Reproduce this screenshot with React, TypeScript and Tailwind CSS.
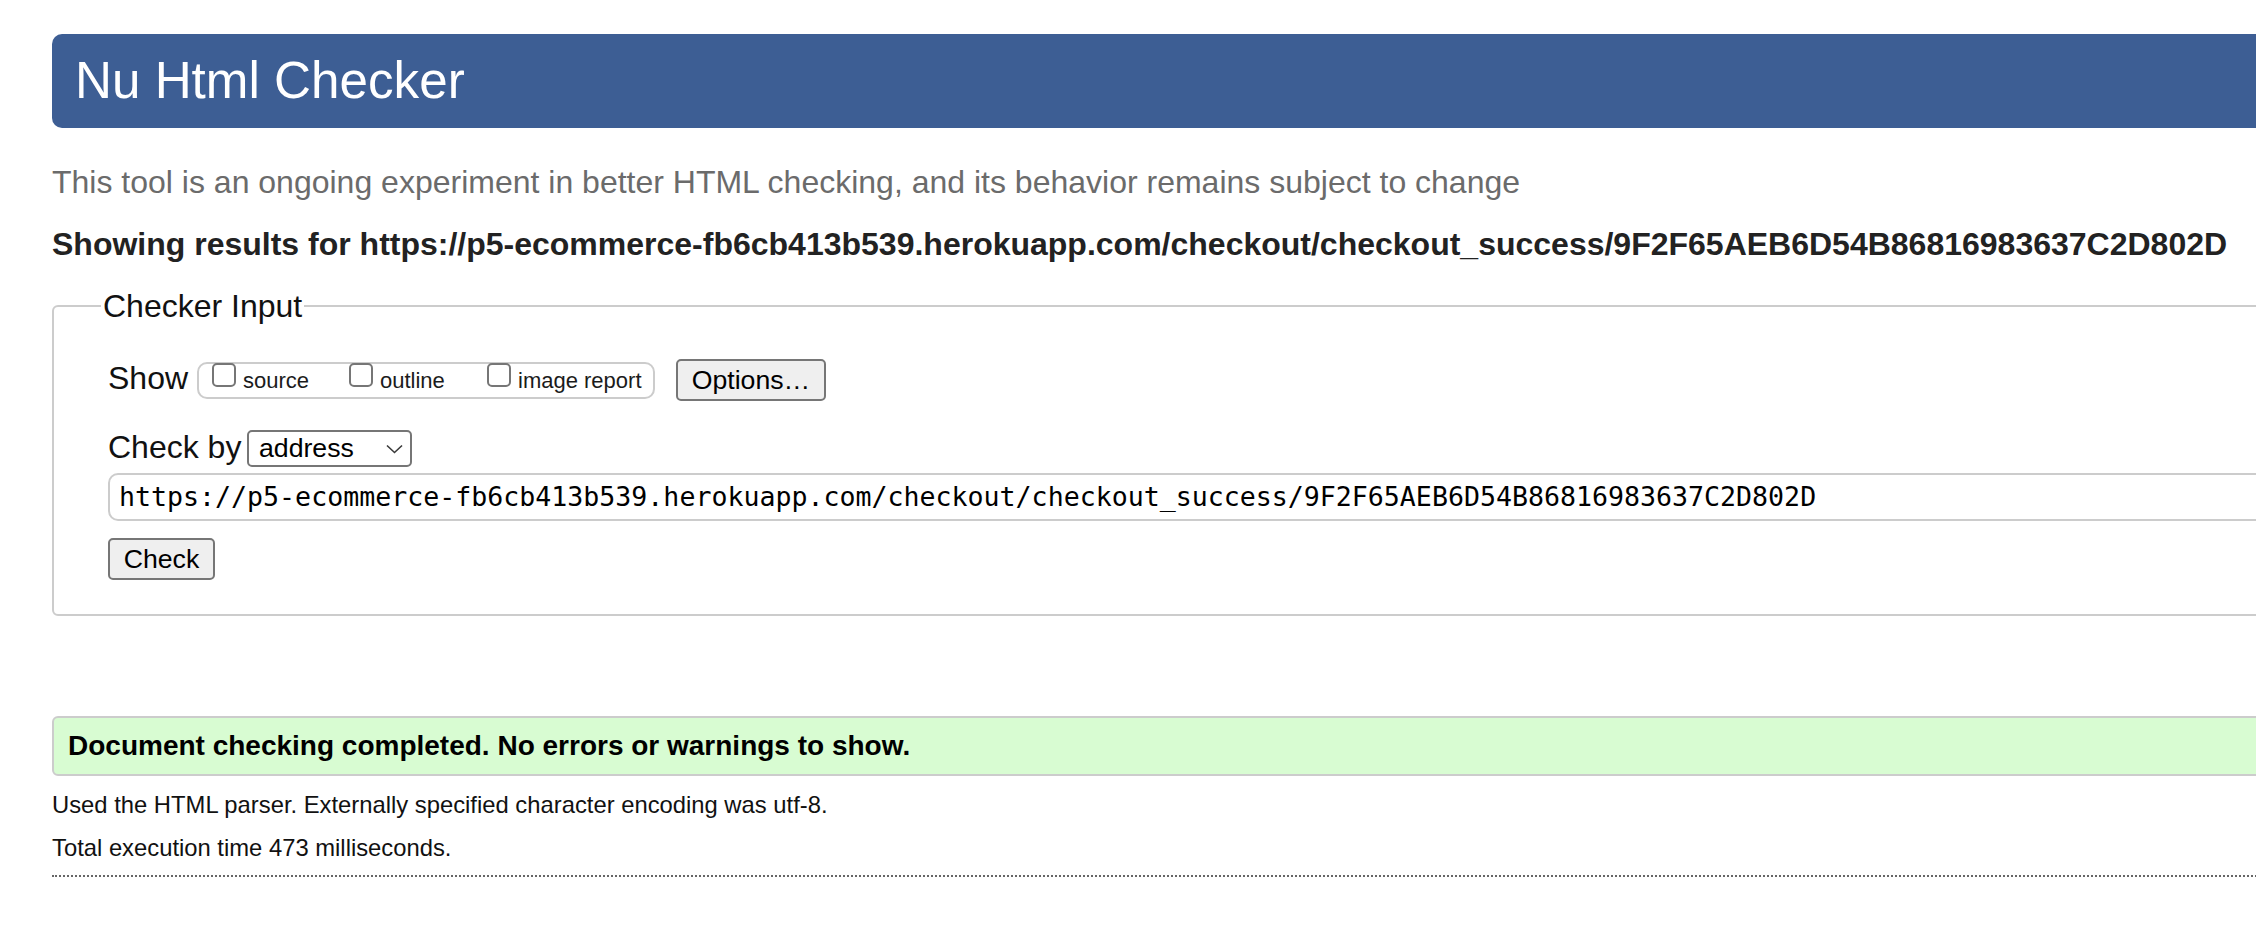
import React from "react";

const URL =
  "https://p5-ecommerce-fb6cb413b539.herokuapp.com/checkout/checkout_success/9F2F65AEB6D54B86816983637C2D802D";

function CheckBox({ label, width }: { label: string; width?: string }) {
  return (
    <label className={`flex items-start ${width ?? ""}`}>
      <span className="-mt-px block h-[24px] w-[24px] shrink-0 rounded-[5px] border-2 border-[#767676] bg-white" />
      <span className="ml-[7px] mt-[6px] text-[22px] leading-none text-[#1b1b1b]">{label}</span>
    </label>
  );
}

export default function App() {
  return (
    <div className="h-[928px] w-[2256px] overflow-hidden bg-white font-['Liberation_Sans',Arial,sans-serif]">
      <div className="w-[2400px] pl-[52px] pt-[34px]">
        <h1 className="flex h-[94px] items-center rounded-l-[10px] bg-[#3d5e94] pl-[23px] text-[51.2px] font-normal leading-none text-white">
          Nu Html Checker
        </h1>

        <p className="mt-[38px] text-[32px] leading-none text-[#6b6b6b]">
          This tool is an ongoing experiment in better HTML checking, and its behavior remains subject to change
        </p>

        <p className="mt-[30px] text-[32px] font-bold leading-none text-[#222]">
          Showing results for {URL}
        </p>

        <fieldset className="mt-[30px] rounded-[6px] border-2 border-[#ccc]">
          <legend className="ml-[47px] px-[2px] text-[32px] leading-none text-[#111]">Checker Input</legend>
          <div className="pb-[34px] pl-[54px] pt-[37px]">
            {/* show row */}
            <div className="flex h-[42px] items-center">
              <span className="w-[89px] pb-[4px] text-[32px] leading-none text-[#111]">Show</span>
              <div className="flex h-[37px] w-[458px] items-start rounded-[10px] border-2 border-[#ccc] pl-[13px]">
                <CheckBox label="source" width="w-[137px]" />
                <CheckBox label="outline" width="w-[138px]" />
                <CheckBox label="image report" />
              </div>
              <button className="ml-[21px] flex h-[42px] w-[150px] items-center justify-center rounded-[5px] border-2 border-[#767676] bg-[#efefef] text-[26.67px] leading-none text-black">
                Options…
              </button>
            </div>

            {/* check by row */}
            <div className="mt-[29px] flex h-[37px] items-center">
              <span className="w-[139px] pb-[4px] text-[32px] leading-none text-[#111]">Check by</span>
              <div className="flex h-[37px] w-[165px] items-center justify-between rounded-[5px] border-2 border-[#767676] bg-white pl-[10px] pr-[7px]">
                <span className="text-[26.67px] leading-none text-black">address</span>
                <svg width="17" height="10" viewBox="0 0 17 10" fill="none">
                  <path d="M1 1.5 L8.5 8.5 L16 1.5" stroke="#3a3a3a" strokeWidth="1.6" />
                </svg>
              </div>
            </div>

            {/* url input */}
            <div className="mt-[6px] flex h-[48px] w-[2300px] items-center rounded-[10px] border-2 border-[#ccc] bg-white pl-[9px]">
              <span className="font-['DejaVu_Sans_Mono','Liberation_Mono',monospace] text-[26.6px] leading-none text-black">
                {URL}
              </span>
            </div>

            <button className="mt-[17px] flex h-[42px] w-[107px] items-center justify-center rounded-[5px] border-2 border-[#767676] bg-[#efefef] text-[26.67px] leading-none text-black">
              Check
            </button>
          </div>
        </fieldset>

        <div className="mt-[100px] flex h-[60px] items-center rounded-[6px] border-2 border-[#ccc] bg-[#d8fcd2] pl-[14px]">
          <span className="text-[28px] font-bold leading-none text-black">
            Document checking completed. No errors or warnings to show.
          </span>
        </div>

        <p className="mt-[17px] text-[23.8px] leading-none text-[#111]">
          Used the HTML parser. Externally specified character encoding was utf-8.
        </p>
        <p className="mt-[19px] text-[23.8px] leading-none text-[#111]">Total execution time 473 milliseconds.</p>

        <div className="mt-[15px] border-t-2 border-dotted border-[#666]" />
      </div>
    </div>
  );
}
